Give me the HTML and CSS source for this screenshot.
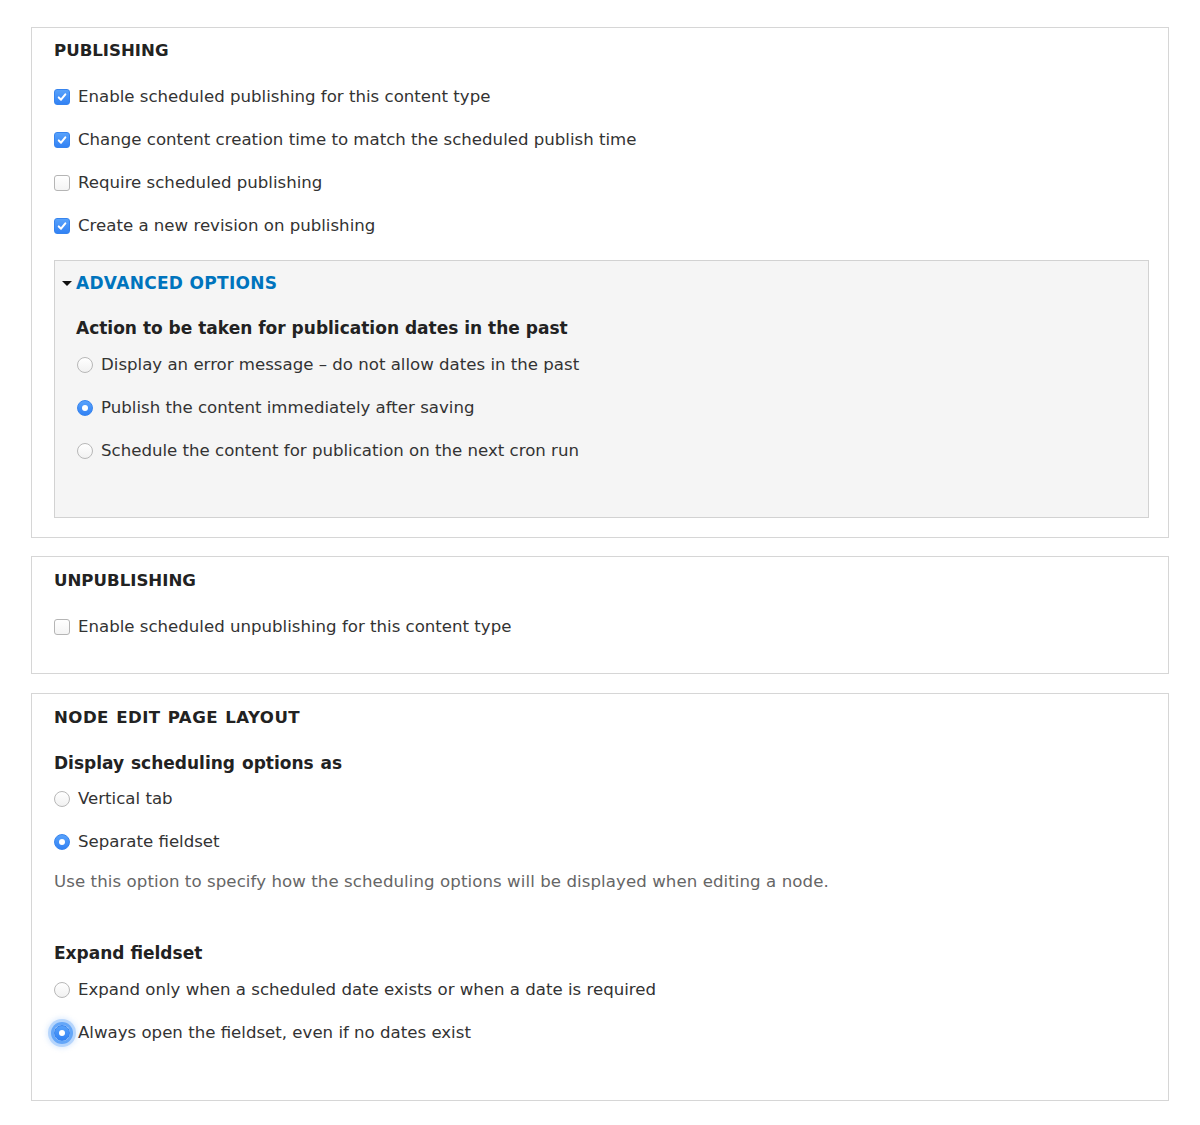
FILE: index.html
```html
<!DOCTYPE html>
<html lang="en">
<head>
<meta charset="utf-8">
<title>Scheduler settings</title>
<link rel="stylesheet" href="styles.css">
</head>
<body>
<div class="page">
  <section class="fs fs-publishing">
    <div class="legend">PUBLISHING</div>
    <div class="opts opts-first">
      <div class="row"><span class="cb on"><svg viewBox="0 0 16 16"><path d="M4.3 8.5 L6.9 11.1 L11.8 4.9" /></svg></span><span class="lbl">Enable scheduled publishing for this content type</span></div>
      <div class="row"><span class="cb on"><svg viewBox="0 0 16 16"><path d="M4.3 8.5 L6.9 11.1 L11.8 4.9" /></svg></span><span class="lbl">Change content creation time to match the scheduled publish time</span></div>
      <div class="row"><span class="cb"></span><span class="lbl">Require scheduled publishing</span></div>
      <div class="row"><span class="cb on"><svg viewBox="0 0 16 16"><path d="M4.3 8.5 L6.9 11.1 L11.8 4.9" /></svg></span><span class="lbl">Create a new revision on publishing</span></div>
    </div>
    <div class="details">
      <div class="summary"><span class="tri"></span><span class="summary-text">ADVANCED OPTIONS</span></div>
      <div class="field-title adv-title">Action to be taken for publication dates in the past</div>
      <div class="opts adv-opts">
        <div class="row"><span class="rb"></span><span class="lbl">Display an error message – do not allow dates in the past</span></div>
        <div class="row"><span class="rb on"></span><span class="lbl">Publish the content immediately after saving</span></div>
        <div class="row"><span class="rb"></span><span class="lbl">Schedule the content for publication on the next cron run</span></div>
      </div>
    </div>
  </section>

  <section class="fs fs-unpublishing">
    <div class="legend">UNPUBLISHING</div>
    <div class="opts opts-first">
      <div class="row"><span class="cb"></span><span class="lbl">Enable scheduled unpublishing for this content type</span></div>
    </div>
  </section>

  <section class="fs fs-layout">
    <div class="legend legend-wide">NODE EDIT PAGE LAYOUT</div>
    <div class="field-title display-title">Display scheduling options as</div>
    <div class="opts display-opts">
      <div class="row"><span class="rb"></span><span class="lbl">Vertical tab</span></div>
      <div class="row"><span class="rb on"></span><span class="lbl">Separate fieldset</span></div>
    </div>
    <div class="desc">Use this option to specify how the scheduling options will be displayed when editing a node.</div>
    <div class="field-title expand-title">Expand fieldset</div>
    <div class="opts expand-opts">
      <div class="row"><span class="rb"></span><span class="lbl">Expand only when a scheduled date exists or when a date is required</span></div>
      <div class="row"><span class="rb on focus"></span><span class="lbl">Always open the fieldset, even if no dates exist</span></div>
    </div>
  </section>
</div>
</body>
</html>
```

FILE: styles.css
```css
html, body {
  margin: 0;
  padding: 0;
  background: #ffffff;
}

body {
  font-family: "DejaVu Sans", "Lucida Grande", sans-serif;
  font-size: 16.6px;
  color: #333333;
}

.page {
  padding: 27px 31px 20px 31px;
  width: 1138px;
}

.fs {
  box-sizing: border-box;
  width: 1138px;
  border: 1px solid #d6d6d6;
  padding: 12px 19px 0 22px;
}

.fs-publishing {
  padding-top: 11px;
  padding-bottom: 19px;
}

.fs-publishing .legend {
  margin-bottom: 1px;
}

.fs-unpublishing {
  margin-top: 18px;
  padding-bottom: 25px;
}

.fs-layout {
  margin-top: 19px;
  padding-top: 12px;
  padding-bottom: 46px;
}

.legend {
  font-weight: bold;
  line-height: 24px;
  height: 24px;
  color: #222222;
}

.legend-wide {
  letter-spacing: 0.45px;
  word-spacing: 1px;
}

.opts-first {
  margin-top: 12px;
}

.row {
  height: 43px;
  display: flex;
  align-items: center;
}

.lbl {
  line-height: 24px;
  white-space: nowrap;
}

.cb {
  box-sizing: border-box;
  width: 16px;
  height: 16px;
  border-radius: 3px;
  border: 1px solid #b5b5b5;
  background: linear-gradient(#ffffff, #f4f4f4);
  margin-right: 8px;
  flex: none;
  display: flex;
  align-items: center;
  justify-content: center;
}

.cb.on {
  border: 1px solid #3784ee;
  background: linear-gradient(#58a2fb, #3282f4);
}

.cb svg {
  width: 16px;
  height: 16px;
}

.cb svg path {
  fill: none;
  stroke: #ffffff;
  stroke-width: 2.3;
  stroke-linecap: round;
  stroke-linejoin: round;
}

.rb {
  box-sizing: border-box;
  width: 16px;
  height: 16px;
  border-radius: 50%;
  border: 1px solid #b8b8b8;
  background: linear-gradient(#ffffff, #f1f1f1);
  margin-right: 8px;
  flex: none;
  position: relative;
}

.rb.on {
  border: 1px solid #3784ee;
  background: linear-gradient(#58a2fb, #3282f4);
}

.rb.on::after {
  content: "";
  position: absolute;
  left: 4px;
  top: 4px;
  width: 6px;
  height: 6px;
  border-radius: 50%;
  background: #ffffff;
}

.rb.focus {
  box-shadow: 0 0 0 3px rgba(65, 145, 246, 0.7), 0 0 0 6px rgba(110, 172, 250, 0.4), 0 0 4px 8px rgba(150, 195, 252, 0.25);
}

.details {
  margin-top: 13px;
  border: 1px solid #d2d2d2;
  background: #f5f5f5;
  padding: 10px 20px 45px 21px;
}

.summary {
  display: flex;
  align-items: center;
  line-height: 24px;
  height: 24px;
  margin-left: -14px;
}

.tri {
  width: 0;
  height: 0;
  border-left: 5px solid transparent;
  border-right: 5px solid transparent;
  border-top: 5px solid #111111;
  margin-right: 4px;
  margin-top: 1px;
}

.summary-text {
  color: #0074bd;
  font-weight: bold;
  font-size: 17px;
  letter-spacing: 0.3px;
}

.field-title {
  font-weight: bold;
  font-size: 17px;
  line-height: 24px;
  height: 24px;
  color: #222222;
}

.adv-title {
  margin-top: 21px;
}

.adv-opts {
  margin-top: 3px;
}

.adv-opts .rb {
  margin-left: 1px;
}

.display-title {
  margin-top: 21px;
  word-spacing: 1px;
}

.display-opts {
  margin-top: 2px;
}

.desc {
  margin-top: 7px;
  line-height: 24px;
  color: #666666;
  letter-spacing: 0.08px;
}

.expand-title {
  margin-top: 47px;
}

.expand-opts {
  margin-top: 3px;
}
```
